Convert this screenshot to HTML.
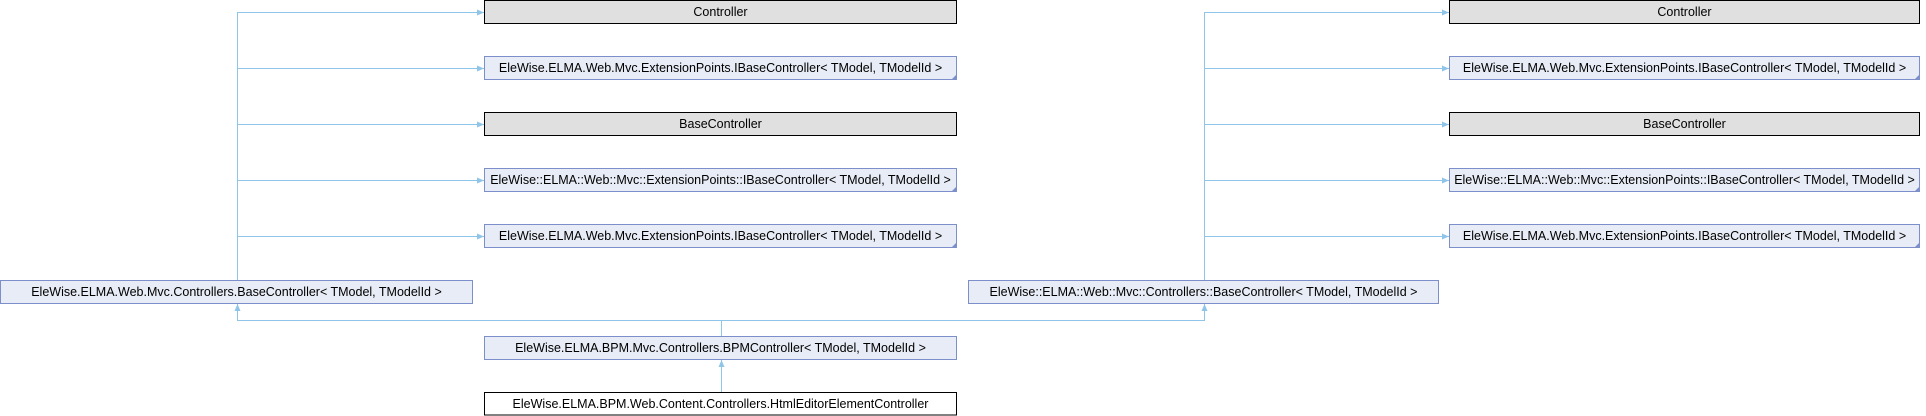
<!DOCTYPE html>
<html><head><meta charset="utf-8"><style>
html,body{margin:0;padding:0;background:#fff;width:1926px;height:416px;overflow:hidden}
svg text{font-family:"Liberation Sans",sans-serif;font-size:12.5px;fill:#000}
</style></head><body>
<svg width="1926" height="416" viewBox="0 0 1926 416" xmlns="http://www.w3.org/2000/svg">
<defs>
<marker id="a" markerWidth="8" markerHeight="8" refX="7" refY="4" orient="auto" markerUnits="userSpaceOnUse"><path d="M0,1 L7,4 L0,7 z" fill="#8fc5e8"/></marker>
</defs>
<g stroke="#8fc5e8" stroke-width="1" fill="none">
<path d="M237.5,281 V12.5 H484" marker-end="url(#a)"/>
<path d="M237.5,68.5 H484" marker-end="url(#a)"/>
<path d="M237.5,124.5 H484" marker-end="url(#a)"/>
<path d="M237.5,180.5 H484" marker-end="url(#a)"/>
<path d="M237.5,236.5 H484" marker-end="url(#a)"/>
<path d="M1204.5,281 V12.5 H1449" marker-end="url(#a)"/>
<path d="M1204.5,68.5 H1449" marker-end="url(#a)"/>
<path d="M1204.5,124.5 H1449" marker-end="url(#a)"/>
<path d="M1204.5,180.5 H1449" marker-end="url(#a)"/>
<path d="M1204.5,236.5 H1449" marker-end="url(#a)"/>
<path d="M721.5,337 V320.5 H237.5 V304" marker-end="url(#a)"/>
<path d="M721.5,320.5 H1204.5 V304" marker-end="url(#a)"/>
<path d="M721.5,393 V360" marker-end="url(#a)"/>
</g>
<g stroke-width="1">
<rect x="484.5" y="0.5" width="472" height="23" fill="#e0e0e0" stroke="#000"/>
<rect x="484.5" y="56.5" width="472" height="23" fill="#e8ecf6" stroke="#7c8fcb"/>
<rect x="484.5" y="112.5" width="472" height="23" fill="#e0e0e0" stroke="#000"/>
<rect x="484.5" y="168.5" width="472" height="23" fill="#e8ecf6" stroke="#7c8fcb"/>
<rect x="484.5" y="224.5" width="472" height="23" fill="#e8ecf6" stroke="#7c8fcb"/>
<rect x="1449.5" y="0.5" width="470" height="23" fill="#e0e0e0" stroke="#000"/>
<rect x="1449.5" y="56.5" width="470" height="23" fill="#e8ecf6" stroke="#7c8fcb"/>
<rect x="1449.5" y="112.5" width="470" height="23" fill="#e0e0e0" stroke="#000"/>
<rect x="1449.5" y="168.5" width="470" height="23" fill="#e8ecf6" stroke="#7c8fcb"/>
<rect x="1449.5" y="224.5" width="470" height="23" fill="#e8ecf6" stroke="#7c8fcb"/>
<rect x="0.5" y="280.5" width="472" height="23" fill="#e8ecf6" stroke="#7c8fcb"/>
<rect x="968.5" y="280.5" width="470" height="23" fill="#e8ecf6" stroke="#7c8fcb"/>
<rect x="484.5" y="336.5" width="472" height="23" fill="#e8ecf6" stroke="#7c8fcb"/>
<rect x="484.5" y="392.5" width="472" height="22.5" fill="#fff" stroke="#000"/>
</g>
<g fill="#7c8fcb">
<path d="M957,74 V80 H951 z"/><path d="M957,186 V192 H951 z"/><path d="M957,242 V248 H951 z"/>
<path d="M1920,74 V80 H1914 z"/><path d="M1920,186 V192 H1914 z"/><path d="M1920,242 V248 H1914 z"/>
</g>
<g text-anchor="middle">
<text x="720.5" y="16">Controller</text>
<text x="720.5" y="72">EleWise.ELMA.Web.Mvc.ExtensionPoints.IBaseController&lt; TModel, TModelId &gt;</text>
<text x="720.5" y="128">BaseController</text>
<text x="720.5" y="184">EleWise::ELMA::Web::Mvc::ExtensionPoints::IBaseController&lt; TModel, TModelId &gt;</text>
<text x="720.5" y="240">EleWise.ELMA.Web.Mvc.ExtensionPoints.IBaseController&lt; TModel, TModelId &gt;</text>
<text x="1684.5" y="16">Controller</text>
<text x="1684.5" y="72">EleWise.ELMA.Web.Mvc.ExtensionPoints.IBaseController&lt; TModel, TModelId &gt;</text>
<text x="1684.5" y="128">BaseController</text>
<text x="1684.5" y="184">EleWise::ELMA::Web::Mvc::ExtensionPoints::IBaseController&lt; TModel, TModelId &gt;</text>
<text x="1684.5" y="240">EleWise.ELMA.Web.Mvc.ExtensionPoints.IBaseController&lt; TModel, TModelId &gt;</text>
<text x="236.5" y="296">EleWise.ELMA.Web.Mvc.Controllers.BaseController&lt; TModel, TModelId &gt;</text>
<text x="1203.5" y="296">EleWise::ELMA::Web::Mvc::Controllers::BaseController&lt; TModel, TModelId &gt;</text>
<text x="720.5" y="352">EleWise.ELMA.BPM.Mvc.Controllers.BPMController&lt; TModel, TModelId &gt;</text>
<text x="720.5" y="408">EleWise.ELMA.BPM.Web.Content.Controllers.HtmlEditorElementController</text>
</g>
</svg>
</body></html>
